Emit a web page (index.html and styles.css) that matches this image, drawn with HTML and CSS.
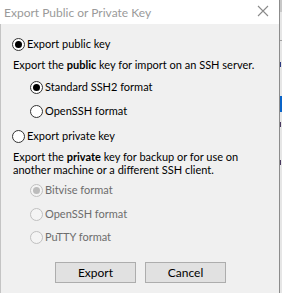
FILE: index.html
```html
<!DOCTYPE html>
<html lang="en">
<head>
  <meta charset="UTF-8">
  <title>Export Public or Private Key</title>
  <link rel="stylesheet" href="styles.css">
</head>
<body>
  <div class="screen">
    <div class="dialog">
      <div class="titlebar">
        <span class="title">Export Public or Private Key</span>
        <svg class="close" width="12" height="12" viewBox="0 0 12 12">
          <path d="M1 1 L11 11 M11 1 L1 11" stroke="#8a8a8a" stroke-width="1.1" fill="none"/>
        </svg>
      </div>
      <div class="content">
        <label class="radio checked top-opt"><span class="dot"></span>Export public key</label>
        <p class="desc">Export the <b>public</b> key for import on an SSH server.</p>
        <label class="radio checked sub first-sub"><span class="dot"></span>Standard SSH2 format</label>
        <label class="radio sub"><span class="dot"></span>OpenSSH format</label>
        <label class="radio top-opt second"><span class="dot"></span>Export private key</label>
        <p class="desc desc-two">Export the <b>private</b> key for backup or for use on<br>another machine or a different SSH client.</p>
        <label class="radio checked disabled sub first-sub"><span class="dot"></span>Bitvise format</label>
        <label class="radio disabled sub"><span class="dot"></span>OpenSSH format</label>
        <label class="radio disabled sub last-sub"><span class="dot"></span>PuTTY format</label>
        <div class="buttons">
          <button class="btn">Export</button>
          <button class="btn">Cancel</button>
        </div>
      </div>
    </div>
    <div class="backdrop">
      <div class="seg seg-top"></div>
      <div class="seg seg-line"></div>
      <div class="seg seg-ink"></div>
      <div class="seg seg-blue"></div>
      <div class="seg seg-ink2"></div>
      <div class="seg seg-ink3"></div>
    </div>
  </div>
</body>
</html>
```

FILE: styles.css
```css
body {
  margin: 0;
  font-family: 'Lato', 'Noto Sans', sans-serif;
  font-size: 11px;
  color: #000;
  background: #f0f0f0;
}

.screen {
  display: flex;
  width: 282px;
  height: 293px;
  overflow: hidden;
}

.dialog {
  width: 279px;
  flex: none;
  border-right: 1px solid #8c8c8c;
  background: #f0f0f0;
}

.titlebar {
  height: 24px;
  background: #fff;
  display: flex;
  align-items: center;
  justify-content: space-between;
  padding: 0 10px 0 4px;
}

.title {
  color: #9a9a9a;
  font-size: 12px;
}

.close {
  margin-top: -2px;
}

.content {
  border-left: 1px solid #c4c4c4;
  padding: 13px 0 0 12px;
  height: 269px;
  box-sizing: border-box;
}

.radio {
  display: flex;
  align-items: center;
  height: 14px;
  line-height: 14px;
}

.dot {
  width: 11px;
  height: 11px;
  border: 1px solid #333;
  border-radius: 50%;
  background: #fff;
  margin-right: 2px;
  display: flex;
  align-items: center;
  justify-content: center;
  flex: none;
}

.checked .dot::after {
  content: "";
  width: 7px;
  height: 7px;
  border-radius: 50%;
  background: #000;
}

.disabled {
  color: #6d6d6d;
}

.disabled .dot {
  border-color: #c0c0c0;
  background: #f4f4f4;
}

.disabled.checked .dot::after {
  background: #bcbcbc;
}

.top-opt {
  margin-left: -1px;
}

.second {
  margin-top: 11px;
}

.sub {
  margin-left: 17px;
  margin-top: 10px;
}

.first-sub {
  margin-top: 9px;
}

.last-sub {
  margin-top: 9px;
}

.desc {
  margin: 7px 0 0 0;
  line-height: 13px;
  white-space: nowrap;
}

.desc-two {
  margin-top: 7px;
}

.desc-two + .first-sub {
  margin-top: 7px;
}

.buttons {
  display: flex;
  gap: 9px;
  margin: 18px 0 0 42px;
}

.btn {
  width: 81px;
  height: 21px;
  background: #e1e1e1;
  border: 1px solid #adadad;
  font-family: inherit;
  font-size: 12px;
  color: #000;
  padding: 0;
}

.backdrop {
  flex: 1;
  background: #e6e6e6;
  position: relative;
}

.seg {
  position: absolute;
  left: 0;
  width: 100%;
}

.seg-top { top: 0; height: 12px; background: #c8c8c8; }
.seg-line { top: 40px; height: 1px; background: #a0a0a0; }
.seg-ink { top: 62px; height: 5px; background: #2b3a80; width: 1px; }
.seg-blue { top: 96px; height: 16px; background: #0a64c8; }
.seg-ink2 { top: 122px; height: 5px; background: #4a3a60; width: 1px; }
.seg-ink3 { top: 160px; height: 5px; background: #4a3a60; width: 1px; }
```
